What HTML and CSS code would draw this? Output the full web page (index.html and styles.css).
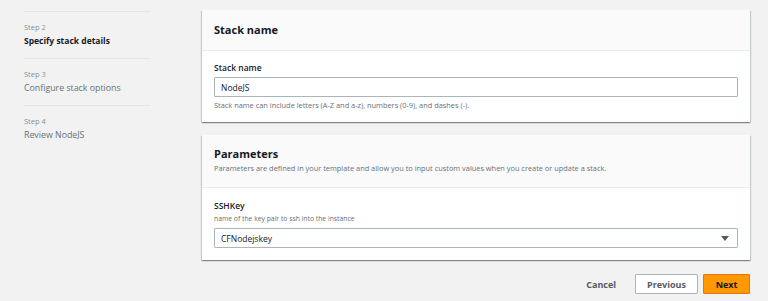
FILE: index.html
```html
<!DOCTYPE html>
<html lang="en">
<head>
    <meta charset="UTF-8">
    <meta name="viewport" content="width=device-width, initial-scale=1.0">
    <title>Create stack - Specify stack details</title>
    <link rel="stylesheet" href="styles.css">
</head>
<body>

    <div class="wizard">
        <nav class="steps">
            <div class="step active">
                <span class="step-num">Step 2</span>
                <span class="step-title">Specify stack details</span>
            </div>
            <div class="step">
                <span class="step-num">Step 3</span>
                <span class="step-title">Configure stack options</span>
            </div>
            <div class="step">
                <span class="step-num">Step 4</span>
                <span class="step-title">Review NodeJS</span>
            </div>
        </nav>

        <main class="content">
            <section class="panel">
                <header class="panel-head">
                    <h2>Stack name</h2>
                </header>
                <div class="panel-body">
                    <label class="field-label" for="stackName">Stack name</label>
                    <input class="field" id="stackName" type="text" value="NodeJS">
                    <p class="hint">Stack name can include letters (A-Z and a-z), numbers (0-9), and dashes (-).</p>
                </div>
            </section>

            <section class="panel">
                <header class="panel-head params-head">
                    <h2>Parameters</h2>
                    <p class="desc">Parameters are defined in your template and allow you to input custom values when you create or update a stack.</p>
                </header>
                <div class="panel-body params-body">
                    <label class="field-label" for="sshKey">SSHKey</label>
                    <p class="field-desc">name of the key pair to ssh into the instance</p>
                    <div class="select">
                        <span id="sshKey">CFNodejskey</span>
                        <span class="caret"></span>
                    </div>
                </div>
            </section>

            <div class="actions">
                <button class="btn-link">Cancel</button>
                <button class="btn-normal">Previous</button>
                <button class="btn-primary">Next</button>
            </div>
        </main>
    </div>

</body>
</html>
```

FILE: styles.css
```css
* {
    margin: 0;
    padding: 0;
    box-sizing: border-box;
}

body {
    font-family: 'Open Sans', 'Noto Sans', sans-serif;
    background-color: #f2f2f2;
    color: #16191f;
    width: 768px;
    height: 301px;
    overflow: hidden;
}

.wizard {
    display: flex;
    gap: 52px;
    padding: 10px 18px 0 24px;
}

/* left step list */
.steps {
    width: 126px;
    flex-shrink: 0;
    margin-top: 1px;
}

.step {
    display: flex;
    flex-direction: column;
    border-top: 1px solid #e3e6e6;
    padding: 9px 0 9px;
}

.step-num {
    font-size: 7.5px;
    line-height: 12px;
    color: #879596;
}

.step-title {
    font-size: 8.8px;
    line-height: 16px;
    color: #687078;
}

.step.active .step-title {
    font-size: 8.5px;
    color: #16191f;
    font-weight: 700;
}

/* main column */
.content {
    width: 548px;
    display: flex;
    flex-direction: column;
    gap: 13px;
}

.panel {
    background-color: #fff;
    box-shadow: 0 1px 1px rgba(0, 28, 36, 0.3), 1px 1px 1px rgba(0, 28, 36, 0.15), -1px 1px 1px rgba(0, 28, 36, 0.15);
}

.panel-head {
    background-color: #fafafa;
    border-bottom: 1px solid #eaeded;
    height: 41px;
    padding: 0 12px;
    display: flex;
    flex-direction: column;
    justify-content: center;
}

.panel-head h2 {
    font-size: 11px;
    font-weight: 700;
    line-height: 18px;
}

.params-head {
    height: 53px;
    justify-content: flex-start;
    padding-top: 10px;
}

.desc {
    font-size: 7.4px;
    line-height: 10px;
    color: #687078;
}

.panel-body {
    padding: 10px 12px 12px;
}

.field-label {
    display: block;
    font-size: 8.5px;
    font-weight: 600;
    line-height: 14px;
    margin-bottom: 2px;
}

.field {
    display: block;
    width: 100%;
    height: 20px;
    border: 1px solid #aab7b8;
    border-radius: 1px;
    padding: 0 6px;
    font-family: inherit;
    font-size: 8.5px;
    color: #16191f;
    background-color: #fff;
    outline: none;
}

.hint {
    font-size: 7.4px;
    line-height: 10px;
    color: #687078;
    margin-top: 3px;
}

.params-body {
    padding-top: 11px;
}

.field-desc {
    font-size: 6.8px;
    line-height: 8px;
    color: #687078;
    margin-bottom: 5px;
}

.select {
    display: flex;
    align-items: center;
    justify-content: space-between;
    height: 20px;
    border: 1px solid #aab7b8;
    border-radius: 1px;
    padding: 0 8px 0 6px;
    font-size: 8.5px;
}

.caret {
    width: 0;
    height: 0;
    border-left: 4px solid transparent;
    border-right: 4px solid transparent;
    border-top: 5px solid #545b64;
}

/* footer buttons */
.actions {
    display: flex;
    justify-content: flex-end;
    gap: 5px;
    margin-top: 1px;
}

.actions button {
    font-family: inherit;
    font-size: 9px;
    font-weight: 700;
    height: 20px;
    border-radius: 1px;
    cursor: pointer;
}

.btn-link {
    background: none;
    border: none;
    color: #545b64;
    padding: 0 14px;
}

.btn-normal {
    background-color: #fff;
    border: 1px solid #aab7b8;
    color: #545b64;
    width: 63px;
}

.btn-primary {
    background-color: #ff9900;
    border: 1px solid #ec7211;
    color: #16191f;
    width: 47px;
}
```
